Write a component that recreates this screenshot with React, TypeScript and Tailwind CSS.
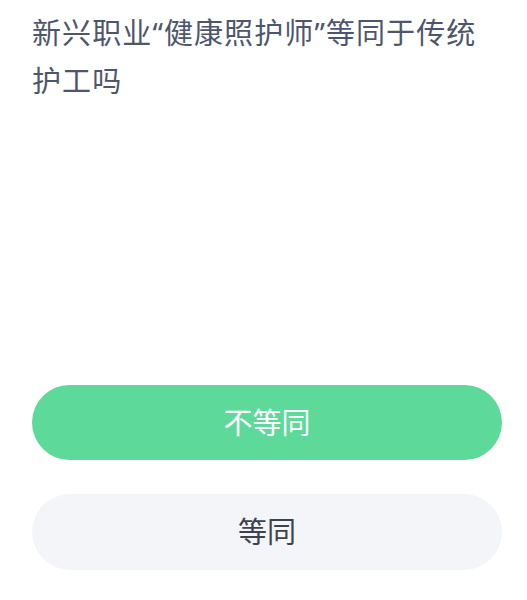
export default function App() {
  const font = { fontFamily: '"Noto Sans", "Noto Sans CJK SC", sans-serif' };
  return (
    <div className="w-[527px] h-[600px] bg-white flex flex-col px-[32px] pt-[9px]" style={font}>
      <div className="text-[29px] leading-[48px] tracking-[1.1px] text-[#4f566b] w-[470px]">
        新兴职业“健康照护师”等同于传统护工吗
      </div>
      <div className="mt-[280px] flex flex-col gap-[34px] w-[470px]">
        <div className="h-[75px] rounded-full bg-[#5dd99a] flex items-center justify-center text-white text-[29px]">
          不等同
        </div>
        <div className="h-[76px] rounded-full bg-[#f4f5f8] flex items-center justify-center text-[#3d424f] text-[29px]">
          等同
        </div>
      </div>
    </div>
  );
}
